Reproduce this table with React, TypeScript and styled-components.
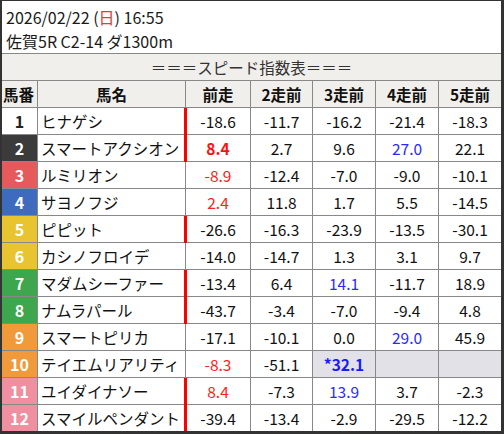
import styled, { createGlobalStyle } from "styled-components";

const GlobalStyle = createGlobalStyle`
  body {
    margin: 0;
    background: #ffffff;
    font-family: "Noto Sans CJK JP", "Noto Sans", sans-serif;
  }
`;

const Frame = styled.div`
  width: 504px;
  height: 434px;
  box-sizing: border-box;
  border-style: solid;
  border-color: #333333;
  border-width: 1px 3px 3px 2px;
  background: #ffffff;
  overflow: hidden;
  color: #111111;
`;

const RaceInfo = styled.div`
  height: 53px;
  box-sizing: border-box;
  border-bottom: 1px solid #888888;
  padding: 4px 0 0 4px;
  font-size: 16px;
  line-height: 24px;
  color: #1a1a1a;
`;

const Sunday = styled.span`
  color: #e8383d;
`;

const TitleBar = styled.div`
  height: 27px;
  box-sizing: border-box;
  border-bottom: 1px solid #888888;
  background: #f1efeb;
  display: flex;
  align-items: center;
  justify-content: center;
  font-size: 15.5px;
  color: #333333;
`;

const Row = styled.div<{ $last?: boolean }>`
  display: grid;
  grid-template-columns: 36px 148px 65px 62px 63px 63px 1fr;
  height: ${(p) => (p.$last ? "26px" : "27px")};
  box-sizing: border-box;
  border-bottom: ${(p) => (p.$last ? "none" : "1px solid #888888")};
`;

const HeadCell = styled.div<{ $left?: boolean }>`
  background: #f1efeb;
  border-right: 1px solid #888888;
  display: flex;
  align-items: center;
  justify-content: ${(p) => (p.$left ? "flex-start" : "center")};
  padding-left: ${(p) => (p.$left ? "1px" : "0")};
  font-weight: 700;
  font-size: 15.5px;
  &:last-child {
    border-right: none;
  }
`;

const NumCell = styled.div<{ $bg: string; $fg: string }>`
  background: ${(p) => p.$bg};
  color: ${(p) => p.$fg};
  border-right: 1px solid #888888;
  display: flex;
  align-items: center;
  justify-content: center;
  font-weight: 700;
  font-size: 16px;
`;

const NameCell = styled.div<{ $mark?: boolean }>`
  position: relative;
  border-right: 1px solid #888888;
  display: flex;
  align-items: center;
  padding-left: 3px;
  font-size: 15.5px;
  white-space: nowrap;
  &::after {
    content: "";
    display: ${(p) => (p.$mark ? "block" : "none")};
    position: absolute;
    right: -2px;
    top: 0;
    bottom: -1px;
    width: 3px;
    background: #ff0000;
    z-index: 1;
  }
`;

type Tone = "plain" | "red" | "redBold" | "blue" | "blueBold";

const toneColor: Record<Tone, string> = {
  plain: "#111111",
  red: "#ff2020",
  redBold: "#ff1010",
  blue: "#2a2aff",
  blueBold: "#1a1aff",
};

const ValueCell = styled.div<{ $tone: Tone; $empty?: boolean }>`
  border-right: 1px solid #888888;
  background: ${(p) => (p.$empty ? "#e1e1e7" : "transparent")};
  color: ${(p) => toneColor[p.$tone]};
  font-weight: ${(p) => (p.$tone === "redBold" || p.$tone === "blueBold" ? 700 : 400)};
  display: flex;
  align-items: center;
  justify-content: center;
  font-size: 15.5px;
  &:last-child {
    border-right: none;
  }
`;

type Val = { v: string; t?: Tone; empty?: boolean };

type Horse = {
  no: number;
  name: string;
  bg: string;
  fg: string;
  mark: boolean;
  vals: Val[];
};

const w = (no: number) => {
  if (no === 1) return { bg: "#ffffff", fg: "#222222" };
  if (no === 2) return { bg: "#3b3b3b", fg: "#ffffff" };
  if (no === 3) return { bg: "#e65a5c", fg: "#ffffff" };
  if (no === 4) return { bg: "#3f6bbf", fg: "#ffffff" };
  if (no <= 6) return { bg: "#e8c431", fg: "#ffffff" };
  if (no <= 8) return { bg: "#3ea64c", fg: "#ffffff" };
  if (no <= 10) return { bg: "#f09a3c", fg: "#ffffff" };
  return { bg: "#ef8fa0", fg: "#ffffff" };
};

const raw: [string, boolean, Val[]][] = [
  ["ヒナゲシ", true, [{ v: "-18.6" }, { v: "-11.7" }, { v: "-16.2" }, { v: "-21.4" }, { v: "-18.3" }]],
  ["スマートアクシオン", true, [{ v: "8.4", t: "redBold" }, { v: "2.7" }, { v: "9.6" }, { v: "27.0", t: "blue" }, { v: "22.1" }]],
  ["ルミリオン", false, [{ v: "-8.9", t: "red" }, { v: "-12.4" }, { v: "-7.0" }, { v: "-9.0" }, { v: "-10.1" }]],
  ["サヨノフジ", false, [{ v: "2.4", t: "red" }, { v: "11.8" }, { v: "1.7" }, { v: "5.5" }, { v: "-14.5" }]],
  ["ピピット", true, [{ v: "-26.6" }, { v: "-16.3" }, { v: "-23.9" }, { v: "-13.5" }, { v: "-30.1" }]],
  ["カシノフロイデ", false, [{ v: "-14.0" }, { v: "-14.7" }, { v: "1.3" }, { v: "3.1" }, { v: "9.7" }]],
  ["マダムシーファー", true, [{ v: "-13.4" }, { v: "6.4" }, { v: "14.1", t: "blue" }, { v: "-11.7" }, { v: "18.9" }]],
  ["ナムラパール", true, [{ v: "-43.7" }, { v: "-3.4" }, { v: "-7.0" }, { v: "-9.4" }, { v: "4.8" }]],
  ["スマートピリカ", false, [{ v: "-17.1" }, { v: "-10.1" }, { v: "0.0" }, { v: "29.0", t: "blue" }, { v: "45.9" }]],
  ["テイエムリアリティ", false, [{ v: "-8.3", t: "red" }, { v: "-51.1" }, { v: "*32.1", t: "blueBold", empty: true }, { v: "", empty: true }, { v: "", empty: true }]],
  ["ユイダイナソー", true, [{ v: "8.4", t: "red" }, { v: "-7.3" }, { v: "13.9", t: "blue" }, { v: "3.7" }, { v: "-2.3" }]],
  ["スマイルペンダント", true, [{ v: "-39.4" }, { v: "-13.4" }, { v: "-2.9" }, { v: "-29.5" }, { v: "-12.2" }]],
];

const horses: Horse[] = raw.map(([name, mark, vals], i) => ({
  no: i + 1,
  name,
  mark,
  vals,
  ...w(i + 1),
}));

const heads = ["前走", "2走前", "3走前", "4走前", "5走前"];

export default function App() {
  return (
    <>
      <GlobalStyle />
      <Frame>
        <RaceInfo>
          <div>
            2026/02/22 (<Sunday>日</Sunday>) 16:55
          </div>
          <div>佐賀5R C2-14 ダ1300m</div>
        </RaceInfo>
        <TitleBar>＝＝＝スピード指数表＝＝＝</TitleBar>
        <Row>
          <HeadCell $left>馬番</HeadCell>
          <HeadCell>馬名</HeadCell>
          {heads.map((h) => (
            <HeadCell key={h}>{h}</HeadCell>
          ))}
        </Row>
        {horses.map((h, i) => (
          <Row key={h.no} $last={i === horses.length - 1}>
            <NumCell $bg={h.bg} $fg={h.fg}>
              {h.no}
            </NumCell>
            <NameCell $mark={h.mark}>{h.name}</NameCell>
            {h.vals.map((v, j) => (
              <ValueCell key={j} $tone={v.t ?? "plain"} $empty={v.empty}>
                {v.v}
              </ValueCell>
            ))}
          </Row>
        ))}
      </Frame>
    </>
  );
}
